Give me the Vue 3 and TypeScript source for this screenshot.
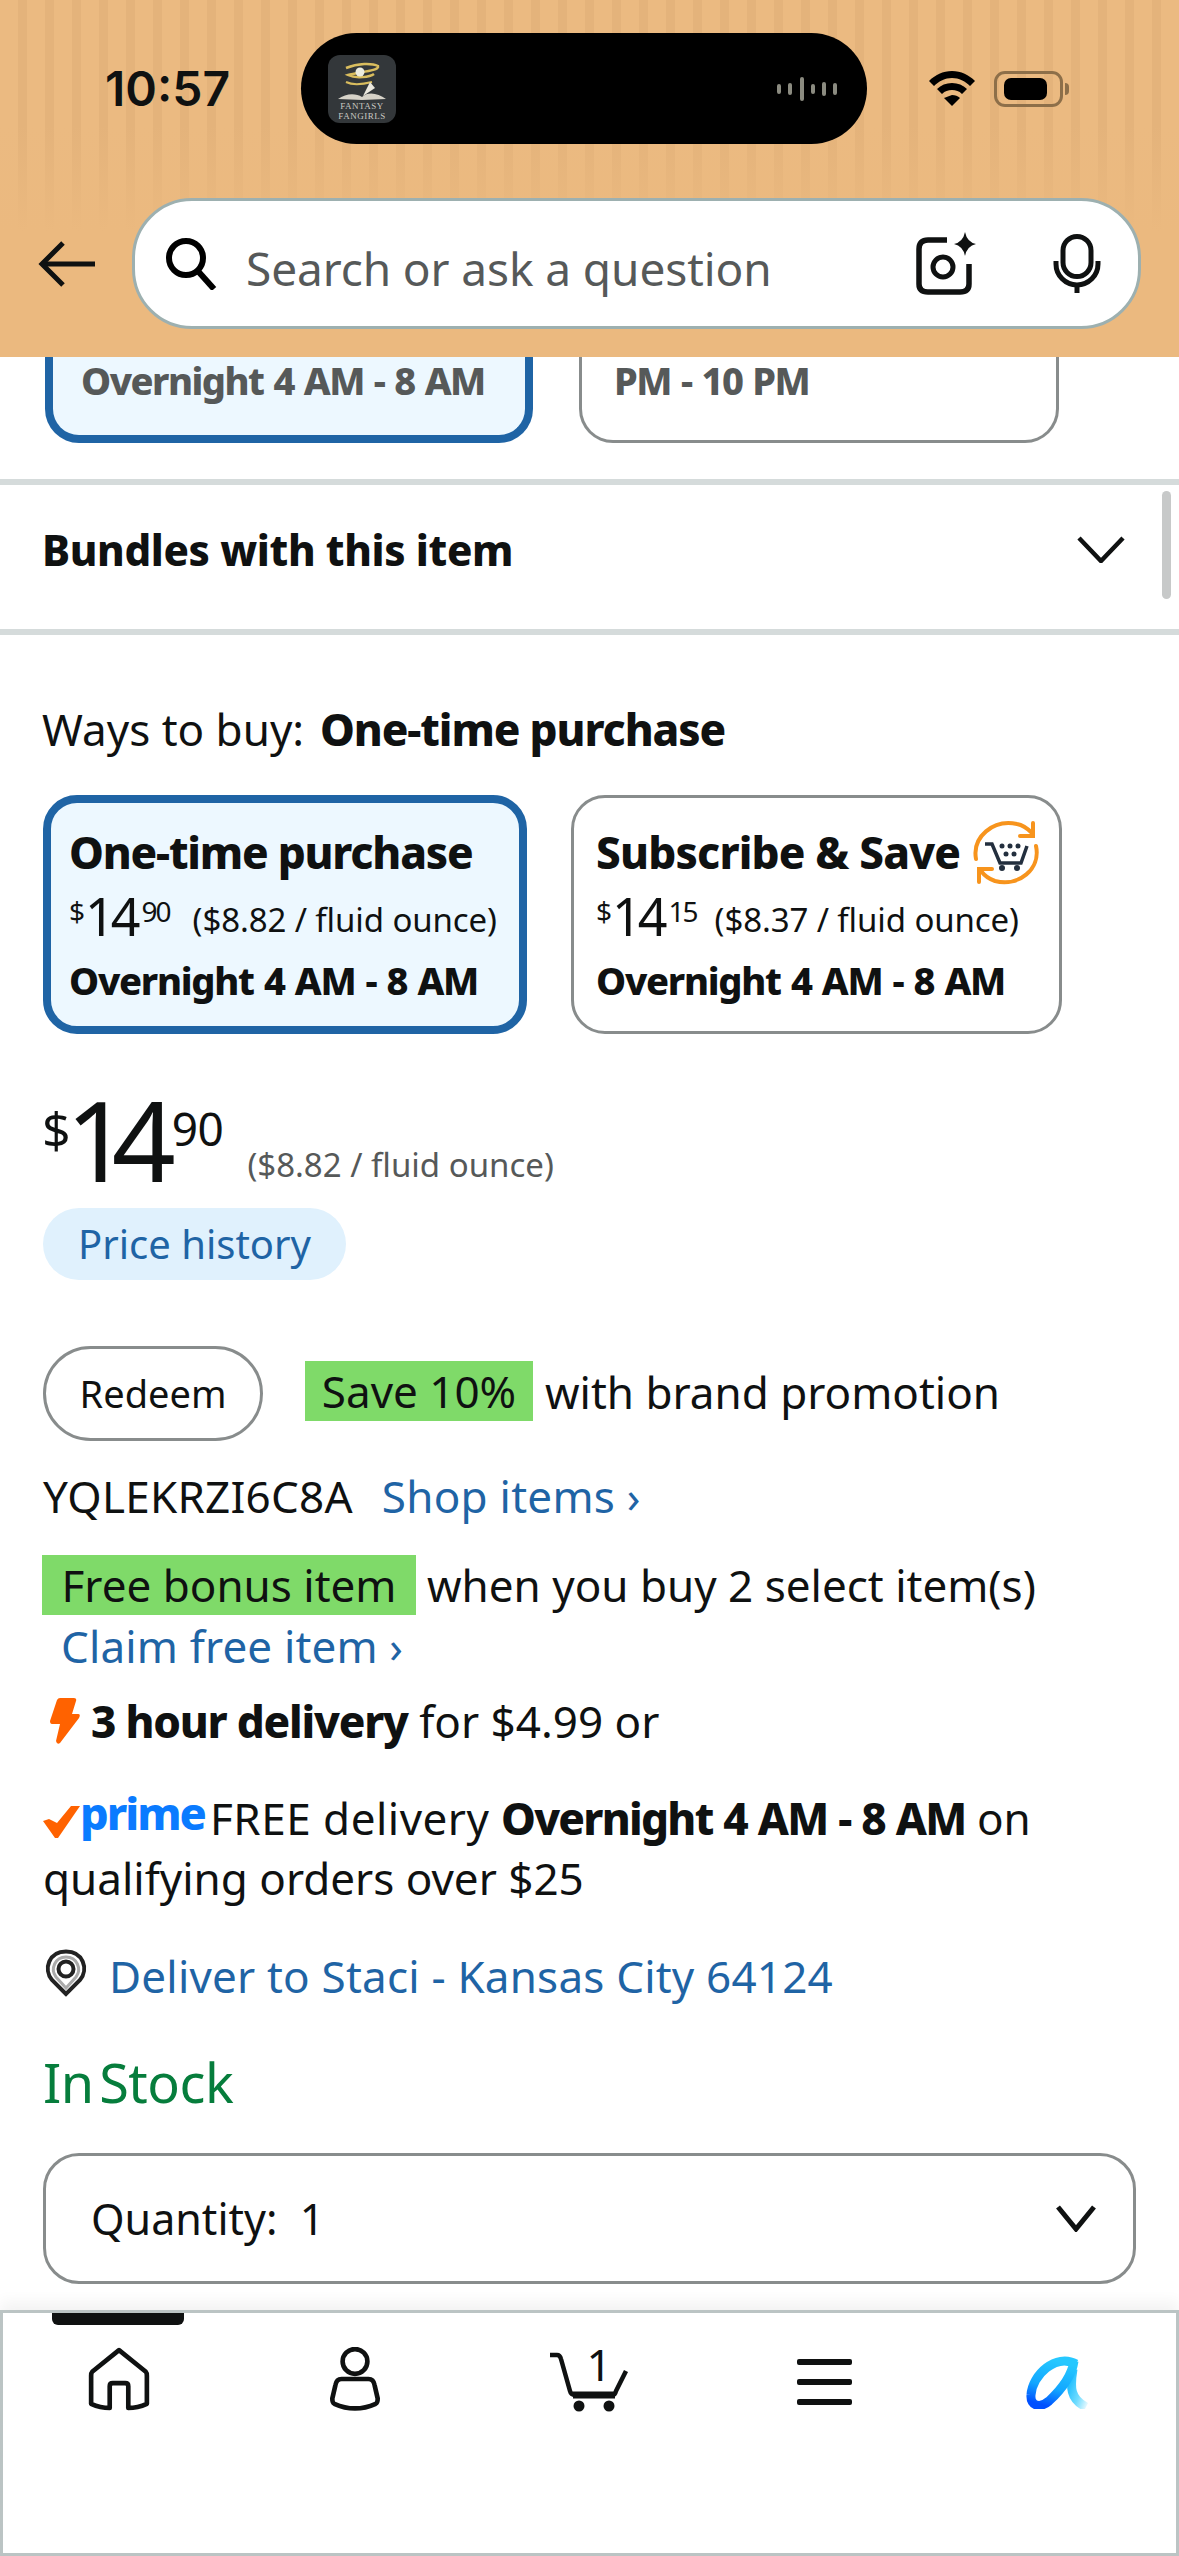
<script setup lang="ts">
interface Offer { title: string; whole: string; cents: string; unit: string; active: boolean }
const offers: Offer[] = [
  { title: 'One-time purchase', whole: '14', cents: '90', unit: '($8.82 / fluid ounce)', active: true },
  { title: 'Subscribe & Save', whole: '14', cents: '15', unit: '($8.37 / fluid ounce)', active: false },
]
</script>

<template>
  <div class="screen">
    <header class="header">
      <div class="status">
        <div class="time">10:57</div>
        <div class="island">
          <svg class="app-logo" viewBox="0 0 68 68">
            <rect width="68" height="68" rx="12" fill="#33373a" />
            <path d="M18 13 C30 8 44 8 50 11 C52 16 30 17 20 20 C28 24 42 22 46 19" fill="none" stroke="#d9bd5e" stroke-width="2.5" />
            <path d="M18 27 C26 31 36 29 44 27" fill="none" stroke="#d9bd5e" stroke-width="2" />
            <circle cx="32" cy="17" r="4.5" fill="#ececdf" />
            <path d="M10 44 C18 38 28 38 34 42 C40 36 50 38 58 44 L34 45 Z" fill="#d6d2c8" />
            <path d="M35 41 L42 27 L47 33 Z" fill="#ebe8de" />
            <text x="34" y="54" class="logo-text">FANTASY</text>
            <text x="34" y="64" class="logo-text">FANGIRLS</text>
          </svg>
          <svg class="wave" viewBox="0 0 62 24">
            <g stroke="#8b8b80" stroke-width="4" stroke-linecap="round">
              <path d="M3 9 V15 M14 8 V16 M26 2 V22 M37 9 V15 M48 7 V17 M59 8 V16" />
            </g>
          </svg>
        </div>
        <svg class="wifi" viewBox="0 0 46 35">
          <path d="M23 0 C14 0 6 4 0 10 L5 15 C10 10 16 7 23 7 C30 7 36 10 41 15 L46 10 C40 4 32 0 23 0Z" />
          <path d="M23 12 C17 12 12 14 8 18 L13 23 C16 20 19 19 23 19 C27 19 30 20 33 23 L38 18 C34 14 29 12 23 12Z" />
          <path d="M23 24 L15 27 L23 35 L31 27 C29 25 26 24 23 24Z" />
        </svg>
        <div class="battery"><span class="battery-fill"></span></div>
        <span class="battery-nub"></span>
      </div>
      <div class="search-row">
        <svg class="back" viewBox="0 0 57 46" fill="none" stroke="#0f1111" stroke-width="5">
          <path d="M57 23 H5" />
          <path d="M25 2 L4 23 L25 44" />
        </svg>
        <div class="search">
          <svg class="magnifier" viewBox="0 0 52 52" fill="none" stroke="#000" stroke-width="6">
            <circle cx="21" cy="20" r="17" />
            <path d="M32 32 L49 51" />
          </svg>
          <span class="placeholder">Search or ask a question</span>
          <svg class="camera" viewBox="0 0 61 63" fill="none" stroke="#0f1111" stroke-width="5.5">
            <path d="M31 8 H12 Q3 8 3 17 V52 Q3 60 12 60 H44 Q53 60 53 52 V32" />
            <circle cx="27" cy="35" r="10" stroke-width="5" />
            <path d="M49 0 Q51 10 60 12 Q51 14 49 24 Q47 14 38 12 Q47 10 49 0Z" fill="#0f1111" stroke="none" />
          </svg>
          <svg class="mic" viewBox="0 0 48 59" fill="none" stroke="#0f1111" stroke-width="5">
            <rect x="10" y="2.5" width="28" height="40" rx="14" />
            <path d="M3 27 V30 A21 21 0 0 0 45 30 V27" />
            <path d="M24 50 V59" />
          </svg>
        </div>
      </div>
    </header>

    <main class="main">
      <div class="scroll-thumb"></div>
      <div class="clipped-cards">
        <div class="clipped card-a"><span>Overnight 4 AM - 8 AM</span></div>
        <div class="clipped card-b"><span>PM - 10 PM</span></div>
      </div>

      <div class="bundles">
        <span>Bundles with this item</span>
        <svg class="chev" viewBox="0 0 48 27" fill="none" stroke="#0f1111" stroke-width="4.5"><path d="M2 2 L24 25 L46 2" /></svg>
      </div>

      <section class="content">
        <div class="ways">Ways to buy:&nbsp; <b>One-time purchase</b></div>

        <div class="offers">
          <div v-for="o in offers" :key="o.title" class="offer" :class="{ active: o.active }">
            <div class="offer-title">
              <span>{{ o.title }}</span>
              <svg v-if="!o.active" class="sns" viewBox="0 0 67 67" fill="none">
                <g stroke="#f7941d" stroke-width="4" stroke-linecap="round">
                  <path d="M3 40 C-1 18 20 0 44 5 C50 6 55 10 59 14" />
                  <path d="M63 27 C68 50 46 68 22 62 C16 60 11 56 8 52" />
                  <path d="M60 4 V17 H47" />
                  <path d="M6 63 V50 H19" />
                </g>
                <path d="M12 25 H19 L27 44 H48 L54 27" stroke="#232f3e" stroke-width="3.5" />
                <circle cx="29" cy="49" r="3" fill="#232f3e" /><circle cx="44" cy="49" r="3" fill="#232f3e" />
                <g fill="#232f3e"><circle cx="29" cy="27" r="2.5" /><circle cx="37" cy="27" r="2.5" /><circle cx="45" cy="27" r="2.5" /><circle cx="33" cy="35" r="2.5" /><circle cx="41" cy="35" r="2.5" /></g>
              </svg>
            </div>
            <div class="offer-price">
              <span class="mini-sign">$</span><span class="mini-whole">{{ o.whole }}</span><span class="mini-cents">{{ o.cents }}</span>
              <span class="mini-unit">{{ o.unit }}</span>
            </div>
            <div class="offer-time">Overnight 4 AM - 8 AM</div>
          </div>
        </div>

        <div class="price">
          <span class="sign">$</span><span class="whole">14</span><span class="cents">90</span>
          <span class="unit">($8.82 / fluid ounce)</span>
        </div>
        <div class="history">Price history</div>

        <div class="promo">
          <div class="redeem">Redeem</div>
          <span class="tag save">Save 10%</span>
          <span class="promo-text">with brand promotion</span>
        </div>
        <div class="code"><span>YQLEKRZI6C8A</span><a class="link">Shop items ›</a></div>

        <div class="bonus"><span class="tag free">Free bonus item</span><span>when you buy 2 select item(s)</span></div>
        <a class="link claim">Claim free item ›</a>

        <div class="hour">
          <svg class="bolt" viewBox="0 0 30 46"><path d="M10 0 H24 Q27 0 26 3 L22 16 H28 Q31 16 29 20 L10 45 Q7 47 6 43 L10 26 H2 Q0 26 0 23 L7 2 Q8 0 10 0Z" fill="#ff6200" /></svg>
          <span><b>3 hour delivery</b> for $4.99 or</span>
        </div>

        <div class="prime-line">
          <svg class="check" viewBox="0 0 37 32"><polygon points="0,15 6,13 14,17 28,0 37,0 15,32 12,32" fill="#ff6200" /></svg>
          <span class="prime">prime</span>
          <span><span class="free-word">FREE delivery</span> <b>Overnight 4 AM - 8 AM</b> on</span>
        </div>
        <div class="prime-second">qualifying orders over $25</div>

        <div class="deliver">
          <svg class="pin" viewBox="0 0 42 48" fill="none">
            <path d="M21 45 L7 31 C-2 20 4 2.5 21 2.5 C38 2.5 44 20 35 31 Z" stroke="#222" stroke-width="4" />
            <path d="M21 39 L11 28 C5 20 10 8 21 8 C32 8 37 20 31 28 Z" stroke="#aaa" stroke-width="3" />
            <circle cx="21" cy="20" r="7.5" stroke="#222" stroke-width="4" />
          </svg>
          <a class="link">Deliver to Staci - Kansas City 64124</a>
        </div>

        <div class="stock">In Stock</div>

        <div class="quantity">
          <span>Quantity:&nbsp; 1</span>
          <svg class="qty-chev" viewBox="0 0 42 27" fill="none" stroke="#0f1111" stroke-width="5"><path d="M3 2 L21 24 L39 2" /></svg>
        </div>
      </section>
    </main>

    <nav class="nav">
      <span class="indicator"></span>
      <div class="nav-item">
        <svg class="i-home" viewBox="0 0 60 62" fill="none" stroke="#0f1111" stroke-width="4.5" stroke-linejoin="round">
          <path d="M30 3 L4 24 Q3 25 3 28 V55 Q12 59 21 59 V38 Q21 35 24 35 H36 Q39 35 39 38 V59 Q48 59 57 55 V28 Q57 25 56 24 Z" />
        </svg>
      </div>
      <div class="nav-item">
        <svg class="i-person" viewBox="0 0 52 62" fill="none" stroke="#0f1111" stroke-width="4.5">
          <circle cx="26" cy="14" r="12" />
          <path d="M13 31 H39 Q44 31 45 37 L48 50 Q48 54 46 55 Q26 64 6 55 Q4 54 4 50 L7 37 Q8 31 13 31Z" />
        </svg>
      </div>
      <div class="nav-item">
        <div class="cart">
          <svg viewBox="0 0 80 66" fill="none" stroke="#0f1111" stroke-width="4.5">
            <path d="M1 8 H8 Q11 8 12 12 L21 44 Q22 48 26 48 H64 Q66 48 67 44 L77 24" />
            <path d="M24 48 H66" stroke-width="7" />
            <circle cx="30" cy="59" r="5.5" fill="#0f1111" stroke="none" />
            <circle cx="60" cy="59" r="5.5" fill="#0f1111" stroke="none" />
          </svg>
          <span class="cart-count">1</span>
        </div>
      </div>
      <div class="nav-item">
        <div class="burger"><span></span><span></span><span></span></div>
      </div>
      <div class="nav-item">
        <svg class="i-alexa" viewBox="0 0 65 54" fill="none">
          <defs>
            <linearGradient id="al1" x1="0.6" y1="0" x2="0.3" y2="1">
              <stop offset="0" stop-color="#26c8ff" /><stop offset="0.6" stop-color="#12a6ff" /><stop offset="1" stop-color="#0050ff" />
            </linearGradient>
            <linearGradient id="al2" x1="0" y1="0" x2="1" y2="1">
              <stop offset="0" stop-color="#10b8ff" /><stop offset="0.6" stop-color="#6fdcff" /><stop offset="1" stop-color="#e2f8ff" />
            </linearGradient>
          </defs>
          <path d="M47 14 C44 32 44 44 60 52" stroke="url(#al2)" stroke-width="9" />
          <path d="M50 9 C30 -2 6 20 5 40 C4 52 15 53 23 46 C36 34 46 20 48 6" stroke="url(#al1)" stroke-width="9" />
        </svg>
      </div>
    </nav>
  </div>
</template>

<style scoped>
.screen {
  width: 1179px;
  height: 2556px;
  display: flex;
  flex-direction: column;
  background: #fff;
  color: #0f1111;
  font-family: "Noto Sans", sans-serif;
  overflow: hidden;
}
b { font-weight: 800; letter-spacing: -1.2px; }
.header {
  height: 357px;
  flex: none;
  position: relative;
  z-index: 2;
  padding-top: 33px;
  box-sizing: border-box;
  background:
    linear-gradient(#ebb97f00 0, #ebb97f00 35%, #ebb97f 65%),
    repeating-linear-gradient(90deg, #ebba81 0 18px, #e4b37b 18px 27px);
}
.status { height: 111px; display: flex; align-items: center; }
.time {
  width: 301px;
  box-sizing: border-box;
  padding-left: 105px;
  font: 600 48px "Inter", sans-serif;
}
.island {
  width: 566px;
  height: 111px;
  border-radius: 56px;
  background: #000;
  display: flex;
  align-items: center;
  justify-content: space-between;
  padding: 0 29px 0 27px;
  box-sizing: border-box;
}
.app-logo { width: 68px; height: 68px; }
.logo-text { font: 9px "Liberation Serif", serif; fill: #c9c9c2; text-anchor: middle; letter-spacing: .5px; }
.wave { width: 62px; height: 24px; }
.wifi { width: 46px; height: 35px; margin-left: 62px; }
.battery {
  width: 69px;
  height: 36px;
  margin-left: 19px;
  border: 3px solid #8d6f49;
  border-radius: 11px;
  box-sizing: border-box;
  padding: 4px 7px;
  display: flex;
}
.battery-fill { flex: 1; background: #000; border-radius: 7px; margin-right: 6px; }
.battery-nub { width: 4px; height: 12px; margin-left: 2px; background: #8d6f49; border-radius: 0 4px 4px 0; }
.search-row { margin-top: 54px; display: flex; align-items: center; padding-left: 38px; }
.back { width: 57px; height: 46px; flex: none; margin-right: 37px; }
.search {
  width: 1009px;
  height: 131px;
  box-sizing: border-box;
  border: 3px solid #9db0b0;
  border-radius: 60px;
  background: #fff;
  display: flex;
  align-items: center;
  padding: 0 37px 0 30px;
}
.magnifier { width: 52px; height: 52px; flex: none; margin-right: 29px; }
.placeholder { flex: 1; font-size: 46px; color: #565959; margin-top: 8px; letter-spacing: -.1px; }
.camera { width: 61px; height: 63px; flex: none; margin-right: 76px; }
.mic { width: 48px; height: 59px; flex: none; }

.main { flex: 1; min-height: 0; position: relative; }
.scroll-thumb { position: absolute; left: 1162px; top: 134px; width: 9px; height: 108px; border-radius: 5px; background: #c7c9c9; }
.clipped-cards { height: 86px; display: flex; padding-left: 45px; gap: 46px; }
.clipped {
  height: 86px;
  box-sizing: border-box;
  border-radius: 0 0 34px 34px;
  font-size: 38px;
  font-weight: 800;
  letter-spacing: -1.5px;
  word-spacing: 1.5px;
  color: #565959;
}
.card-a { width: 488px; border: 8px solid #1f64a5; border-top: 0; background: #edf8ff; padding-left: 28px; }
.card-b { width: 480px; border: 3px solid #888c8c; border-top: 0; padding-left: 32px; }
.clipped span { display: block; line-height: 46px; }
.bundles {
  margin-top: 36px;
  height: 156px;
  box-sizing: border-box;
  border-top: 6px solid #d5dbdb;
  border-bottom: 6px solid #d5dbdb;
  padding: 0 54px 16px 42px;
  display: flex;
  align-items: center;
  justify-content: space-between;
  font-size: 42px;
  font-weight: 800;
  letter-spacing: -.35px;
}
.chev { width: 48px; height: 27px; }
.content { padding: 0 43px; }
.ways { margin-top: 64px; height: 60px; line-height: 60px; font-size: 44px; margin-left: -1px; }
.ways b { margin-left: -7px; letter-spacing: -1.1px; }
.offers { margin-top: 36px; display: flex; gap: 44px; }
.offer {
  width: 491px;
  height: 239px;
  box-sizing: border-box;
  border: 3px solid #888c8c;
  border-radius: 34px;
  padding: 29px 0 0 22px;
}
.offer.active {
  width: 484px;
  border: 8px solid #1f64a5;
  background: #edf8ff;
  padding: 24px 0 0 18px;
}
.offer-title { height: 50px; line-height: 50px; font-size: 44px; font-weight: 800; letter-spacing: -1.2px; display: flex; align-items: center; gap: 13px; }
.offer:not(.active) .offer-title { letter-spacing: -.8px; }
.sns { width: 67px; height: 67px; flex: none; }
.offer-price { margin-top: 6px; height: 66px; display: flex; align-items: baseline; line-height: 66px; }
.mini-sign { font-size: 28px; position: relative; top: -14px; }
.mini-whole { font-size: 52px; letter-spacing: -4px; }
.mini-cents { font-size: 28px; position: relative; top: -14px; margin-left: 5px; letter-spacing: -2px; }
.mini-unit { font-size: 33px; margin-left: 23px; position: relative; top: -4px; letter-spacing: -.1px; }
.offer:not(.active) .mini-unit { margin-left: 18px; }
.offer-time { margin-top: 6px; height: 50px; line-height: 50px; font-size: 38px; font-weight: 800; letter-spacing: -1.25px; word-spacing: 1.5px; }
.price { margin-top: 60px; height: 90px; display: flex; align-items: baseline; line-height: 90px; margin-left: -1px; }
.sign { font-size: 50px; position: relative; top: -34px; }
.whole { font-size: 112px; letter-spacing: -18px; margin-left: -5px; }
.cents { font-size: 46px; position: relative; top: -36px; margin-left: 14px; letter-spacing: -.5px; }
.unit { font-size: 33px; color: #565959; margin-left: 24px; position: relative; top: -5px; }
.history {
  margin-top: 24px;
  width: 303px;
  height: 72px;
  line-height: 72px;
  border-radius: 36px;
  background: #e0f1fd;
  color: #1f64a5;
  text-align: center;
  font-size: 40px;
}
.promo { margin-top: 66px; display: flex; align-items: center; font-size: 44px; }
.redeem {
  width: 220px;
  height: 95px;
  box-sizing: border-box;
  border: 3px solid #888c8c;
  border-radius: 48px;
  text-align: center;
  line-height: 89px;
  font-size: 38px;
  margin-right: 42px;
}
.tag { background: #7fda69; height: 60px; line-height: 60px; text-align: center; flex: none; }
.save { width: 228px; margin-top: -5px; }
.promo-text { margin-left: 12px; margin-top: -3px; }
.code { margin-top: 25px; height: 60px; line-height: 60px; font-size: 44px; display: flex; gap: 29px; letter-spacing: .25px; }
.link { color: #1f64a5; }
.bonus { margin-top: 29px; display: flex; font-size: 44px; line-height: 60px; height: 60px; margin-left: -1px; }
.free { width: 374px; margin-right: 11px; }
.claim { display: block; height: 60px; line-height: 60px; font-size: 44px; margin: 1px 0 0 18px; letter-spacing: .15px; }
.hour { margin-top: 15px; display: flex; align-items: center; height: 60px; font-size: 44px; line-height: 60px; }
.hour b { letter-spacing: -1.2px; }
.bolt { width: 30px; height: 46px; margin: 0 11px 0 7px; flex: none; }
.prime-line { margin-top: 37px; display: flex; align-items: center; height: 60px; font-size: 44px; line-height: 60px; white-space: nowrap; }
.free-word { letter-spacing: .5px; }
.prime-line b { letter-spacing: -1.7px; word-spacing: 1px; }
.check { width: 37px; height: 32px; flex: none; margin-top: 8px; }
.prime { color: #0a7bff; font-weight: 800; width: 130px; flex: none; font-size: 45px; margin-top: -10px; letter-spacing: -2px; }
.prime-second { height: 60px; line-height: 60px; font-size: 44px; }
.deliver { margin-top: 38px; display: flex; align-items: center; height: 60px; font-size: 44px; letter-spacing: .2px; }
.pin { width: 42px; height: 48px; flex: none; margin: -6px 22px 0 2px; }
.stock { margin-top: 41px; height: 70px; line-height: 70px; color: #067d3c; font-size: 54px; letter-spacing: -.5px; word-spacing: -8px; }
.quantity {
  margin-top: 36px;
  height: 131px;
  box-sizing: border-box;
  width: 1093px;
  border: 3px solid #888c8c;
  border-radius: 36px;
  padding: 0 36px 0 45px;
  display: flex;
  align-items: center;
  justify-content: space-between;
  font-size: 43px;
}
.qty-chev { width: 42px; height: 27px; }

.nav {
  height: 246px;
  flex: none;
  box-sizing: border-box;
  border: 3px solid #bbc4c4;
  background: #fff;
  box-shadow: 0 -8px 14px rgba(0, 0, 0, .05);
  position: relative;
  z-index: 1;
  display: grid;
  grid-template-columns: repeat(5, 1fr);
  align-items: start;
}
.indicator {
  position: absolute;
  left: 49px;
  top: 0;
  width: 132px;
  height: 12px;
  background: #0f1111;
  border-radius: 0 0 6px 6px;
}
.nav-item { display: flex; justify-content: center; padding-top: 34px; height: 70px; align-items: flex-start; }
.nav-item svg { flex: none; }
.i-home { width: 62px; height: 64px; margin-left: -3px; }
.i-person { width: 54px; height: 64px; }
.cart { position: relative; width: 80px; height: 66px; }
.cart svg { width: 80px; height: 66px; display: block; }
.cart-count { position: absolute; left: 37px; top: -6px; font-size: 44px; line-height: 46px; }
.burger { width: 55px; display: flex; flex-direction: column; gap: 14px; margin-top: 12px; }
.burger span { height: 6px; background: #0f1111; border-radius: 2px; }
.i-alexa { width: 65px; height: 54px; margin-top: 8px; }
</style>
